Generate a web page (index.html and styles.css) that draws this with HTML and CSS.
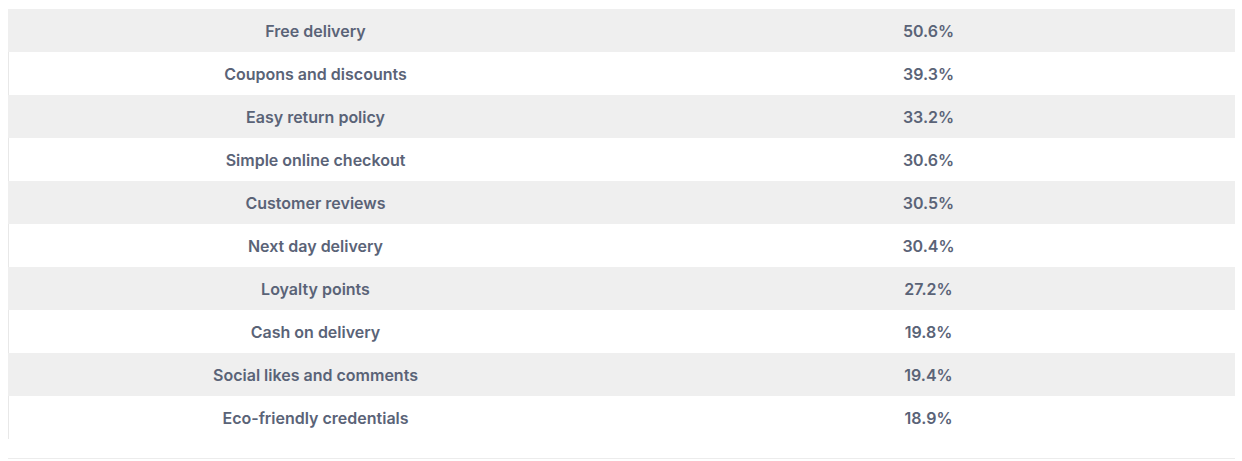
FILE: index.html
```html
<!DOCTYPE html>
<html>
<head>
<meta charset="utf-8">
<link rel="stylesheet" href="styles.css">
</head>
<body>
<div class="table">
  <div class="row alt"><div class="cell">Free delivery</div><div class="cell">50.6%</div></div>
  <div class="row"><div class="cell">Coupons and discounts</div><div class="cell">39.3%</div></div>
  <div class="row alt"><div class="cell">Easy return policy</div><div class="cell">33.2%</div></div>
  <div class="row"><div class="cell">Simple online checkout</div><div class="cell">30.6%</div></div>
  <div class="row alt"><div class="cell">Customer reviews</div><div class="cell">30.5%</div></div>
  <div class="row"><div class="cell">Next day delivery</div><div class="cell">30.4%</div></div>
  <div class="row alt"><div class="cell">Loyalty points</div><div class="cell">27.2%</div></div>
  <div class="row"><div class="cell">Cash on delivery</div><div class="cell">19.8%</div></div>
  <div class="row alt"><div class="cell">Social likes and comments</div><div class="cell">19.4%</div></div>
  <div class="row"><div class="cell">Eco-friendly credentials</div><div class="cell">18.9%</div></div>
</div>
<div class="rule"></div>
</body>
</html>
```

FILE: styles.css
```css
html, body {
  margin: 0;
  padding: 0;
  background: #ffffff;
}
body {
  padding: 9px 7px 0 8px;
  font-family: Inter, "Noto Sans", sans-serif;
}
.table {
  display: flex;
  flex-direction: column;
}
.row {
  display: grid;
  grid-template-columns: 1fr 1fr;
  height: 43px;
  align-items: center;
  border-left: 1px solid #e8e8e8;
  background: #ffffff;
}
.row.alt {
  background: #efefef;
  border-left-color: #efefef;
}
.cell {
  text-align: center;
  font-size: 16px;
  font-weight: 600;
  color: #5a6377;
}
.rule {
  margin-top: 19px;
  height: 1px;
  background: #ececec;
}
```
